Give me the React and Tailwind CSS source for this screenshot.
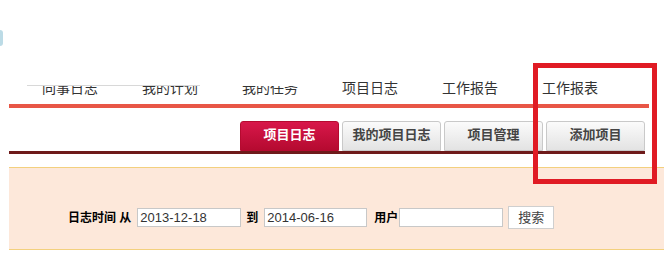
import React from "react";

const navItems = ["同事日志", "我的计划", "我的任务", "项目日志", "工作报告", "工作报表"];
const tabs = [
    { label: "项目日志", active: true },
    { label: "我的项目日志" },
    { label: "项目管理" },
    { label: "添加项目" },
];

const cjk = "font-['Liberation_Sans','Noto_Sans_CJK_SC',sans-serif]";

export default function App() {
    return (
        <div className={`relative w-[664px] h-[257px] overflow-hidden bg-white ${cjk}`}>
            {/* top nav */}
            <div className="pt-[78px] h-[104px]">
                <ul className="flex pl-[42px] text-[14px] leading-[20px] text-[#333]">
                    {navItems.map((item) => (
                        <li key={item} className="w-[100px] shrink-0">
                            {item}
                        </li>
                    ))}
                </ul>
            </div>
            <div className="ml-[9px] w-[640px] h-[4px] bg-[#e85646]" />

            {/* tabs */}
            <div className="mt-[13px] ml-[9px] w-[636px] flex justify-end gap-[3px] border-b-[3px] border-[#6e1a1a]">
                {tabs.map((tab) => (
                    <div
                        key={tab.label}
                        className={`w-[99px] h-[30px] pb-[2px] flex items-center justify-center rounded-t-[3px] text-[13px] font-bold border ${
                            tab.active
                                ? "bg-gradient-to-b from-[#d8174a] to-[#b50a30] border-[#b50a30] text-white"
                                : "bg-gradient-to-b from-[#fbfbfb] to-[#e3e3e3] border-[#c9c9c9] text-[#444]"
                        }`}
                    >
                        {tab.label}
                    </div>
                ))}
            </div>

            {/* search panel */}
            <div className="mt-[13px] ml-[9px] h-[83px] bg-[#fde8da] border-y border-[#f3d07e] pt-[38px] pl-[59px]">
                <div className="flex items-center text-[12px] font-bold text-black">
                    <span>日志时间 从</span>
                    <input
                        readOnly
                        value="2013-12-18"
                        className="ml-[6px] w-[104px] h-[19px] px-[2px] bg-white border border-[#c8c8c8] text-[13px] font-normal text-[#333] outline-none"
                    />
                    <span className="ml-[5px]">到</span>
                    <input
                        readOnly
                        value="2014-06-16"
                        className="ml-[6px] w-[103px] h-[19px] px-[2px] bg-white border border-[#c8c8c8] text-[13px] font-normal text-[#333] outline-none"
                    />
                    <span className="ml-[7px]">用户</span>
                    <input
                        readOnly
                        value=""
                        className="ml-[1px] w-[104px] h-[19px] px-[2px] bg-white border border-[#c8c8c8] outline-none"
                    />
                    <button className="ml-[5px] w-[46px] h-[23px] bg-white border border-[#cfcfcf] text-[13px] font-normal text-[#444]">
                        搜索
                    </button>
                </div>
            </div>

            {/* cropped top of the original capture */}
            <div className="absolute left-0 top-0 w-[300px] h-[86px] bg-white" />
            <div className="absolute left-[27px] top-[85px] w-[173px] h-px bg-[#d8d8d8]" />
            <div className="absolute left-0 top-[30px] w-[3px] h-[16px] rounded-r-full bg-[#bcdbe6]" />

            {/* annotation box */}
            <div className="absolute left-[533px] top-[63px] w-[124px] h-[121px] border-[5px] border-[#e01b24]" />
        </div>
    );
}
